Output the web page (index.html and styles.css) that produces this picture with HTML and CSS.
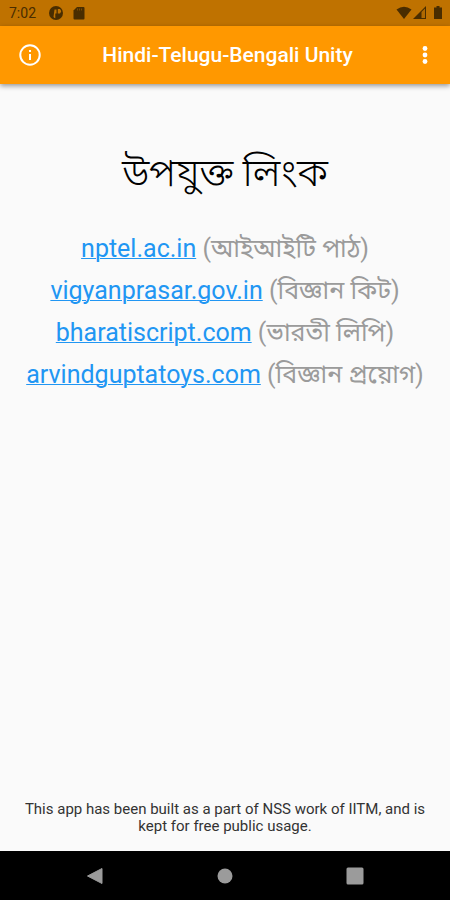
FILE: index.html
```
<!DOCTYPE html>
<html lang="bn">
<head>
<meta charset="utf-8">
<meta name="viewport" content="width=device-width, initial-scale=1">
<title>Hindi-Telugu-Bengali Unity</title>
<link rel="stylesheet" href="styles.css">
</head>
<body>
<div class="status">
  <span class="time">7:02</span>
  <svg class="status-app" width="14" height="14" viewBox="0 0 14 14" aria-hidden="true"><circle cx="7" cy="7" r="7" fill="#492d00"/><path d="M5.500 3.500h2v4H6.300V12.200Q5 12 4.500 11zM8.800 3h2.200q1 1 1.200 2.500L11 7.500H8.800z" fill="#bf7200"/></svg>
  <svg class="status-card" width="12" height="14" viewBox="0 0 12 14" aria-hidden="true"><path d="M4 1h6.500Q11.500 1 11.500 2v10.500q0 1-1 1h-9q-1 0-1-1v-8z" fill="#492d00"/><path d="M4.500 2.500v2M6.500 2.500v2M8.500 2.500v2" stroke="#7d4b00"/></svg>
  <span class="spacer"></span>
  <svg width="16" height="14" viewBox="0 0 16 14" aria-hidden="true"><path d="M.5 3.500Q8-2 15.500 3.500L8 13z" fill="#492d00"/></svg>
  <svg class="signal" width="14" height="14" viewBox="0 0 14 14" aria-hidden="true"><path d="M0 13L13 0v13z" fill="#492d00"/><path d="M8.500 6L12 2.500V12H8.500z" fill="#b06900"/></svg>
  <svg class="battery" width="8" height="14" viewBox="0 0 8 14" aria-hidden="true"><path d="M2.500 0h3v1.500H8V13H0V1.500h2.500z" fill="#492d00"/></svg>
</div>
<header class="bar">
  <button class="icon-button" type="button" aria-label="Info"><svg width="24" height="24" viewBox="0 0 24 24"><circle cx="12" cy="12" r="9.700" fill="none" stroke="#fff" stroke-width="2"/><path d="M11 7h2v2h-2zM11 11h2v6h-2z" fill="#fff"/></svg></button>
  <h1 class="title">Hindi-Telugu-Bengali Unity</h1>
  <button class="icon-button" type="button" aria-label="Menu"><svg width="24" height="24" viewBox="0 0 24 24"><g fill="#fff"><circle cx="12" cy="5.500" r="2.400"/><circle cx="12" cy="12" r="2.400"/><circle cx="12" cy="18.500" r="2.400"/></g></svg></button>
</header>
<main class="content">
  <h2 class="heading">উপযুক্ত লিংক</h2>
  <ul class="links">
    <li><a href="https://nptel.ac.in">nptel.ac.in</a> (আইআইটি পাঠ)</li>
    <li><a href="https://vigyanprasar.gov.in">vigyanprasar.gov.in</a> (বিজ্ঞান কিট)</li>
    <li><a href="https://bharatiscript.com">bharatiscript.com</a> (ভারতী লিপি)</li>
    <li><a href="https://arvindguptatoys.com">arvindguptatoys.com</a> (বিজ্ঞান প্রয়োগ)</li>
  </ul>
</main>
<footer class="note">This app has been built as a part of NSS work of IITM, and is kept for free public usage.</footer>
<nav class="nav">
  <button class="nav-button" type="button" aria-label="Back"><svg width="18" height="18" viewBox="0 0 18 18"><path d="M1.500 9L16 1.500v15z" fill="#9b9b9b" stroke="#9b9b9b" stroke-linejoin="round"/></svg></button>
  <button class="nav-button" type="button" aria-label="Home"><svg width="18" height="18" viewBox="0 0 18 18"><circle cx="9" cy="9" r="7.500" fill="#9b9b9b"/></svg></button>
  <button class="nav-button" type="button" aria-label="Recent apps"><svg width="18" height="18" viewBox="0 0 18 18"><rect x=".5" y=".5" width="17" height="17" rx="1.500" fill="#9b9b9b"/></svg></button>
</nav>
</body>
</html>
```
FILE: styles.css
```
* { box-sizing: border-box; }

body {
  display: flex;
  flex-direction: column;
  min-height: 100vh;
  margin: 0;
  background: #fafafa;
  font-family: Roboto, "Noto Sans Bengali", "Noto Sans", sans-serif;
}

svg { display: block; flex: none; }

button {
  display: grid;
  place-items: center;
  padding: 0;
  border: 0;
  background: none;
}

.status {
  display: flex;
  align-items: center;
  height: 26px;
  padding: 0 8px 0 9px;
  background: #bf7200;
  color: #492d00;
  font-size: 14px;
}

.status-app { margin-left: 13px; }
.status-card { margin-left: 10px; }
.spacer { flex: 1; }
.signal { margin-left: 1px; }
.battery { margin-left: 7px; }

.bar {
  display: flex;
  align-items: center;
  justify-content: space-between;
  height: 58px;
  padding: 0 1px 0 6px;
  background: #ff9800;
  box-shadow: 0 2px 5px rgba(0, 0, 0, 0.4);
}

.icon-button { width: 48px; height: 48px; }

.title {
  margin: 0;
  color: #fff;
  font-size: 21px;
  font-weight: 500;
}

.content {
  flex: 1;
  padding-top: 61px;
  text-align: center;
}

.heading {
  margin: 0;
  color: #000;
  font-size: 39px;
  font-weight: 300;
  line-height: 56px;
}

.links {
  margin: 27px 0 0;
  padding: 0;
  list-style: none;
  color: #9b9b9b;
  font-size: 25px;
  line-height: 42px;
}

.links a {
  color: #2196f3;
  text-decoration-thickness: 1px;
}

.note {
  padding: 0 24px 16px;
  color: #333;
  font-size: 15px;
  line-height: 17px;
  text-align: center;
}

.nav {
  display: flex;
  justify-content: center;
  gap: 82px;
  height: 49px;
  background: #000;
}

.nav-button { width: 48px; }
```
